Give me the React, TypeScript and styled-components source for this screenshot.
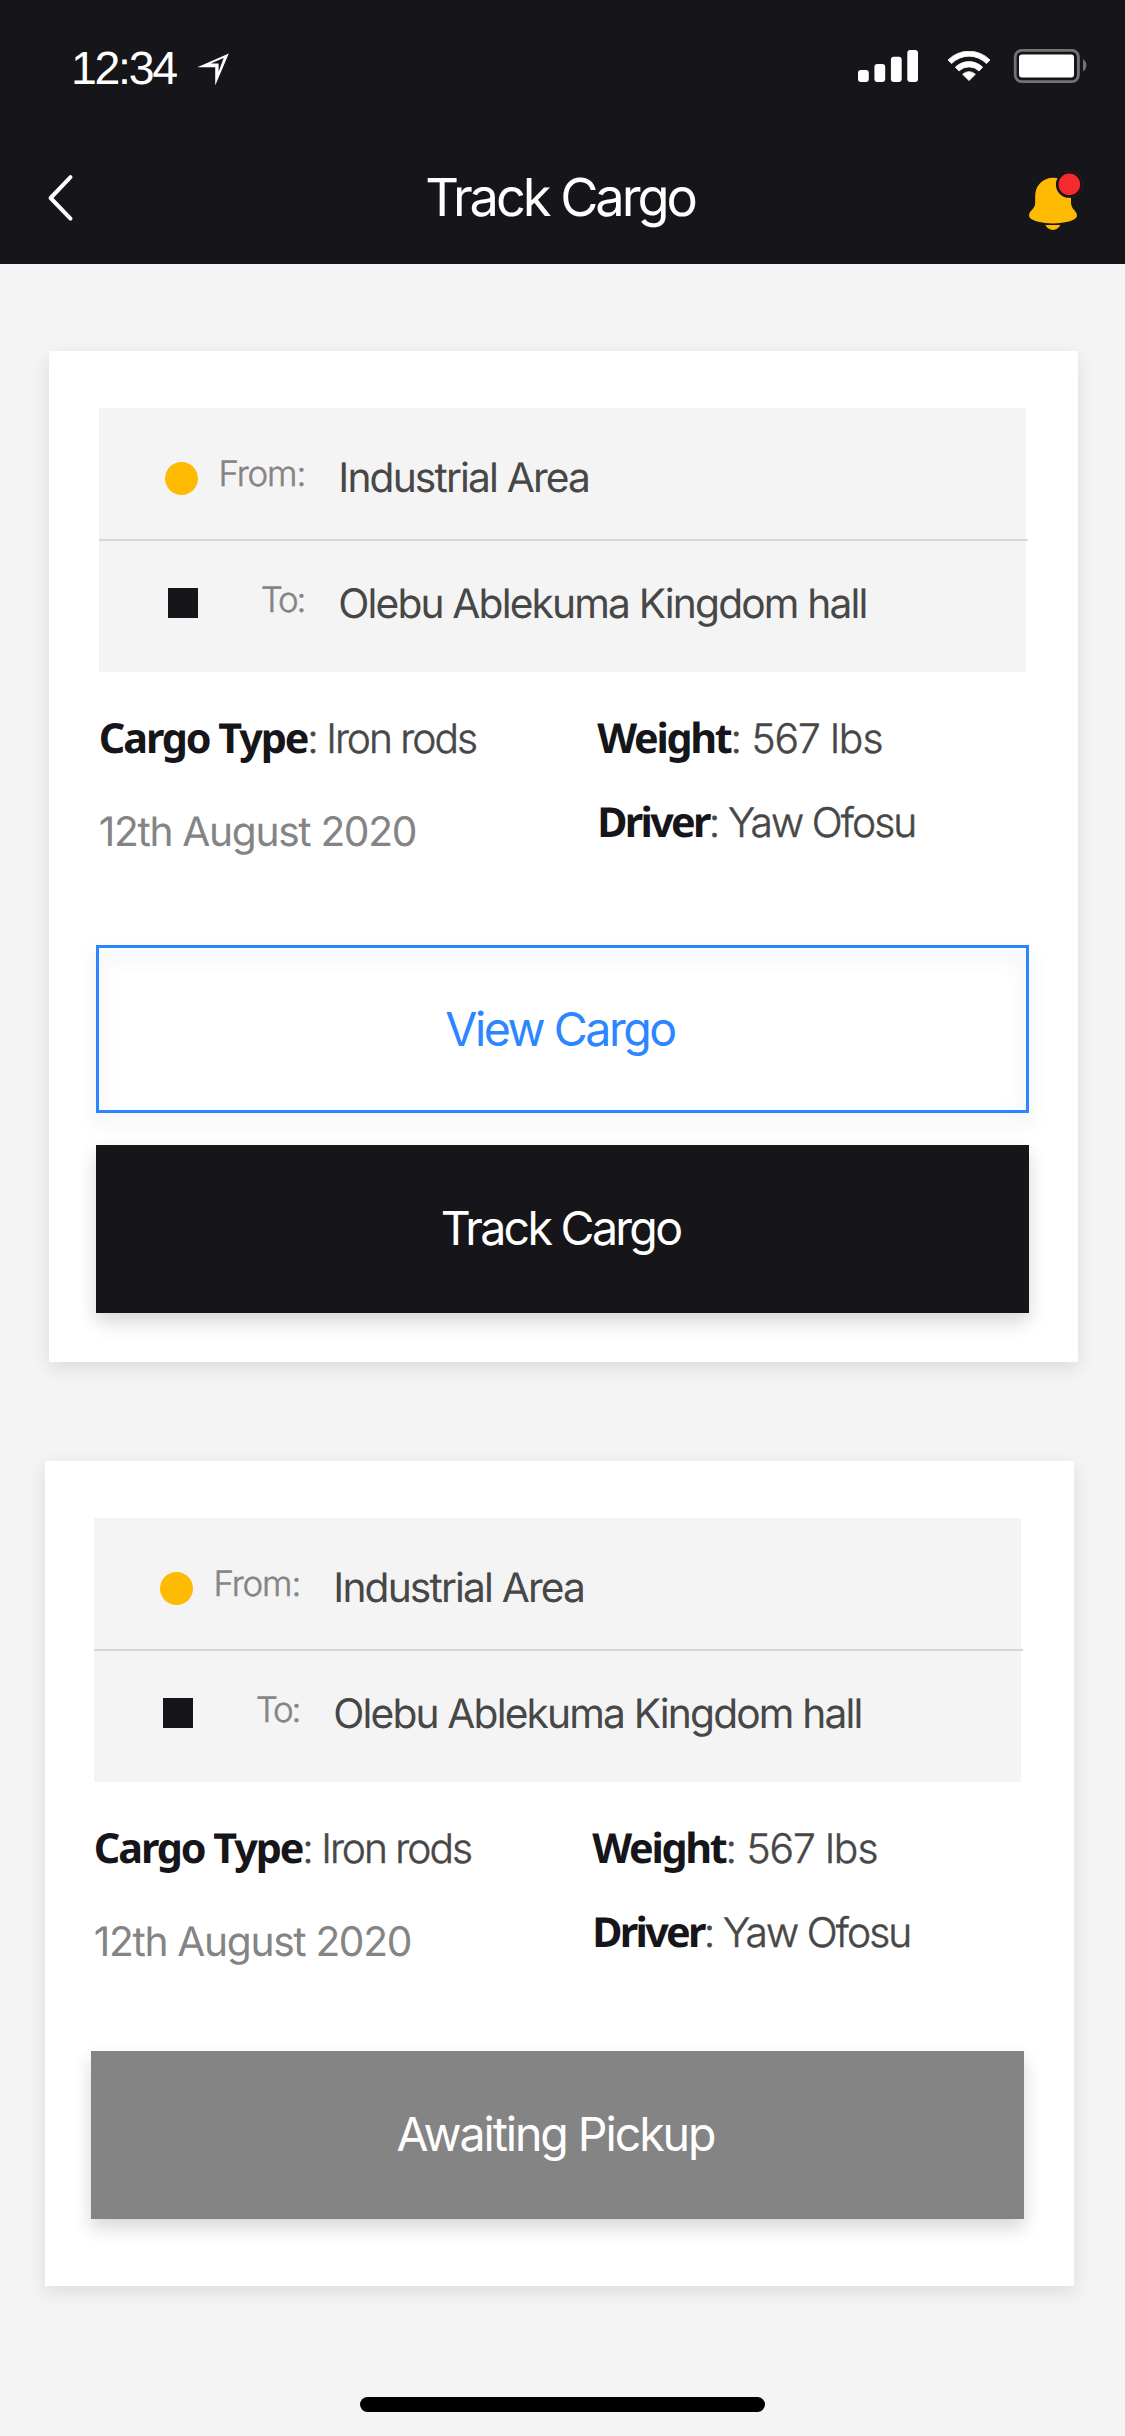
import React from 'react';
import styled, { createGlobalStyle, css } from 'styled-components';

const ink = '#161519';
const text = '#474747';
const muted = '#848484';
const paper = '#f4f4f4';
const amber = '#ffba02';
const blue = '#2c86ff';

const GlobalStyle = createGlobalStyle`
  *, *::before { box-sizing: border-box; }
  body {
    margin: 0;
    background: ${paper};
    font-family: Inter, "Liberation Sans", sans-serif;
    text-rendering: geometricPrecision;
  }
  svg { display: block; flex: none; }
`;

const Screen = styled.div`
  display: flex;
  flex-direction: column;
  width: 1125px;
  height: 2436px;
  overflow: hidden;
  background: ${paper};
`;

const TopArea = styled.header`
  flex: none;
  background: ${ink};
  color: #fff;
`;

const StatusBar = styled.div`
  display: flex;
  align-items: center;
  justify-content: space-between;
  height: 132px;
  padding: 0 38px 0 71px;
`;

const ClockGroup = styled.div`
  display: flex;
  align-items: center;
  gap: 21px;

  svg { margin-top: 6px; }
`;

const Clock = styled.span`
  padding-top: 3px;
  font-family: "Liberation Sans", Arial, sans-serif;
  font-size: 46.5px;
  line-height: 54px;
  letter-spacing: -2.3px;
`;

const SystemIcons = styled.div`
  display: flex;
  align-items: center;

  svg + svg { margin-left: 29px; }
  svg + svg + svg { margin-left: 22px; }
`;

const NavBar = styled.nav`
  display: grid;
  grid-template-columns: 56px 1fr 56px;
  align-items: center;
  height: 132px;
  padding: 0 41px 0 47px;
`;

const Title = styled.h1`
  margin: 0;
  padding: 0 11px 2px 0;
  font-size: 52.35px;
  font-weight: 400;
  line-height: 64px;
  letter-spacing: -3.05px;
  text-align: center;
`;

const IconButton = styled.button<{ $drop?: number }>`
  margin: ${({ $drop = 0 }) => $drop}px 0 0;
  padding: 0;
  border: 0;
  background: none;
`;

const CardList = styled.main`
  display: flex;
  flex-direction: column;
  gap: 99px;
  padding-top: 87px;
`;

const Card = styled.article<{ $left: number; $inset: number; $height: number }>`
  display: flex;
  flex-direction: column;
  width: 1029px;
  height: ${({ $height }) => $height}px;
  margin-left: ${({ $left }) => $left}px;
  padding: 57px ${({ $inset }) => 96 - $inset}px 0 ${({ $inset }) => $inset}px;
  background: #fff;
  box-shadow: 0 6px 18px rgba(0, 0, 0, 0.1);
`;

const Route = styled.section`
  display: flex;
  flex-direction: column;
  width: 927px;
  margin-left: 3px;
  background: ${paper};
`;

const Divider = styled.div`
  width: 929px;
  height: 2px;
  background: #d7d7d7;
`;

const Stop = styled.div<{ $last?: boolean }>`
  display: grid;
  grid-template-columns: 33px 108px 1fr;
  align-items: center;
  height: 131px;
  padding-left: 66.3px;
  padding-bottom: ${({ $last }) => ($last ? 14 : 0)}px;
`;

const Marker = styled.span<{ $square?: boolean }>`
  justify-self: end;
  width: 33px;
  height: 33px;
  margin-top: 10px;
  border-radius: 50%;
  background: ${amber};

  ${({ $square }) =>
    $square &&
    css`
      width: 30px;
      height: 30px;
      margin-top: 7px;
      border-radius: 0;
      background: ${ink};
    `}
`;

const StopLabel = styled.span<{ $track: number }>`
  margin-right: ${({ $track }) => -$track}px;
  color: ${muted};
  font-size: 34.9px;
  font-weight: 300;
  -webkit-text-stroke: 0.5px ${muted};
  line-height: 44px;
  letter-spacing: ${({ $track }) => $track}px;
  text-align: right;
`;

const Place = styled.span`
  padding: 8px 0 0 32px;
  color: ${text};
  font-size: 40.7px;
  line-height: 50px;
  letter-spacing: -1.84px;
  white-space: nowrap;
`;

const Details = styled.section<{ $height: number }>`
  display: grid;
  grid-template-columns: 498.5px 1fr;
  height: ${({ $height }) => $height}px;
  padding: 42px 0 0 2.8px;
`;

const DetailColumn = styled.div<{ $gap: number }>`
  display: flex;
  flex-direction: column;
  gap: ${({ $gap }) => $gap}px;
`;

const Detail = styled.p<{ $track: number }>`
  margin: 0;
  color: ${text};
  font-size: 40.7px;
  font-weight: 300;
  -webkit-text-stroke: 0.5px ${text};
  line-height: 50px;
  letter-spacing: ${({ $track }) => $track}px;
  white-space: nowrap;
`;

const DetailName = styled.strong<{ $track: number }>`
  color: ${ink};
  font-family: "Noto Sans", "Open Sans", sans-serif;
  font-size: 41.3px;
  font-weight: 700;
  -webkit-text-stroke: 0;
  line-height: 0;
  letter-spacing: ${({ $track }) => $track}px;
`;

const DateText = styled.time`
  color: ${muted};
  font-size: 40.7px;
  line-height: 50px;
  letter-spacing: -1.33px;
`;

const Actions = styled.footer`
  display: flex;
  flex-direction: column;
  gap: 32px;
  width: 933px;
`;

const Button = styled.button<{ $track: number; $fill: string }>`
  height: 168px;
  padding: 0 4px 2px 0;
  border: 0;
  background: ${({ $fill }) => $fill};
  box-shadow: 0 9px 18px rgba(0, 0, 0, 0.16);
  color: #fff;
  font: 400 46.5px/58px Inter, sans-serif;
  letter-spacing: ${({ $track }) => $track}px;
`;

const OutlineButton = styled(Button)`
  display: grid;
  padding: 0;
  box-shadow: none;
  color: ${blue};

  &::before {
    content: '';
    grid-area: 1 / 1;
    border: 3px solid ${blue};
    filter: drop-shadow(0 9px 9px rgba(0, 0, 0, 0.16));
  }

  span {
    grid-area: 1 / 1;
    place-self: center;
    padding: 0 5px 0 0;
  }
`;

const HomeIndicator = styled.div`
  flex: none;
  width: 405px;
  height: 15px;
  margin: 111px auto 0;
  border-radius: 7.5px;
  background: #000;
`;

const LocationIcon = () => (
  <svg width="32" height="33" viewBox="0 0 32 33">
    <path
      d="M0.3 14.3 31.8 0.4 18.2 32.6V14.2H0.3ZM13.8 10.4H21.6V18.8L26.6 5.1Z"
      fill="#fff"
      fillRule="evenodd"
    />
  </svg>
);

const SignalIcon = () => (
  <svg width="60" height="32" viewBox="0 0 60 32" fill="#fff">
    <rect x="0" y="20" width="10.8" height="12" rx="3" />
    <rect x="16.4" y="14" width="10.8" height="18" rx="3" />
    <rect x="32.9" y="6.8" width="10.8" height="25.2" rx="3" />
    <rect x="49.3" y="0" width="10.7" height="32" rx="3" />
  </svg>
);

const WifiIcon = () => (
  <svg width="44" height="30" viewBox="0 0 44 30" fill="#fff" stroke="#fff" strokeWidth="0.8" strokeLinejoin="round">
    <path d="M1 9A29.5 29.5 0 0 1 43 9L39.5 12.6A24.4 24.4 0 0 0 4.5 12.6Z" />
    <path d="M8.3 16.2A19.6 19.6 0 0 1 35.7 16.2L32 20A14.2 14.2 0 0 0 12 20Z" />
    <path d="M15.6 23.3A9 9 0 0 1 28.4 23.3L22 29.6Z" />
  </svg>
);

const BatteryIcon = () => (
  <svg width="74" height="34" viewBox="0 0 74 34">
    <rect x="2.2" y="1.4" width="63.2" height="31.2" rx="6.6" fill="none" stroke="#737275" strokeWidth="2.8" />
    <rect x="6" y="5.5" width="55" height="23" rx="3" fill="#fff" />
    <path d="M70 10.2C72.4 11.6 73.4 14 73.4 16.3S72.4 21 70 22.4Z" fill="#737275" />
  </svg>
);

const BackIcon = () => (
  <svg width="27" height="48" viewBox="0 0 27 48">
    <path
      d="M23.5 3.2 3.6 24 23.5 44.6"
      fill="none"
      stroke="#fff"
      strokeWidth="4"
      strokeLinecap="round"
      strokeLinejoin="round"
    />
  </svg>
);

const BellIcon = () => (
  <svg width="56" height="60" viewBox="0 0 56 60">
    <path
      d="M25 7.7C15 7.7 7.2 15.5 7.2 25.5V33C7.2 39 1 40.5 1 45.5C1 50 12 53.4 25 53.4S49 50 49 45.5C49 41 43 39 43 33V25.5C43 15.5 35 7.7 25 7.7Z"
      fill={amber}
    />
    <path d="M17.3 54.8C20 55.2 30 55.2 32.5 54.8C30.8 58 28.5 60 25 60S18.8 58 17.3 54.8Z" fill={amber} />
    <circle cx="41.3" cy="14.4" r="13.4" fill={ink} />
    <path d="M36 2.1A13.4 13.4 0 1 1 44 27.5" fill="none" stroke="#f52a2c" strokeOpacity="0.35" strokeWidth="0.5" />
    <circle cx="41.3" cy="14.4" r="10.8" fill="#f52a2c" />
  </svg>
);

interface CargoCardProps {
  left: number;
  inset: number;
  height: number;
  detailsHeight: number;
  children: React.ReactNode;
}

const CargoCard = ({ left, inset, height, detailsHeight, children }: CargoCardProps) => (
  <Card $left={left} $inset={inset} $height={height}>
    <Route>
      <Stop>
        <Marker />
        <StopLabel $track={-1.1}>From:</StopLabel>
        <Place>Industrial Area</Place>
      </Stop>
      <Divider />
      <Stop $last>
        <Marker $square />
        <StopLabel $track={-2.2}>To:</StopLabel>
        <Place>Olebu Ablekuma Kingdom hall</Place>
      </Stop>
    </Route>
    <Details $height={detailsHeight}>
      <DetailColumn $gap={43}>
        <Detail $track={-2}>
          <DetailName $track={-2.08}>Cargo Type</DetailName>: Iron rods
        </Detail>
        <DateText>12th August 2020</DateText>
      </DetailColumn>
      <DetailColumn $gap={34}>
        <Detail $track={-0.98}>
          <DetailName $track={-2.3}>Weight</DetailName>: 567 lbs
        </Detail>
        <Detail $track={-1.86}>
          <DetailName $track={-2.7}>Driver</DetailName>: Yaw Ofosu
        </Detail>
      </DetailColumn>
    </Details>
    <Actions>{children}</Actions>
  </Card>
);

export default function App() {
  return (
    <>
      <GlobalStyle />
      <Screen>
        <TopArea>
          <StatusBar>
            <ClockGroup>
              <Clock>12:34</Clock>
              <LocationIcon />
            </ClockGroup>
            <SystemIcons>
              <SignalIcon />
              <WifiIcon />
              <BatteryIcon />
            </SystemIcons>
          </StatusBar>
          <NavBar>
            <IconButton aria-label="Back">
              <BackIcon />
            </IconButton>
            <Title>Track Cargo</Title>
            <IconButton aria-label="Notifications" $drop={4}>
              <BellIcon />
            </IconButton>
          </NavBar>
        </TopArea>
        <CardList>
          <CargoCard left={49} inset={47} height={1011} detailsHeight={273}>
            <OutlineButton $fill="transparent" $track={-2.45}>
              <span>View Cargo</span>
            </OutlineButton>
            <Button $fill={ink} $track={-2.7}>
              Track Cargo
            </Button>
          </CargoCard>
          <CargoCard left={45} inset={46} height={825} detailsHeight={269}>
            <Button $fill={muted} $track={-2.07}>
              Awaiting Pickup
            </Button>
          </CargoCard>
        </CardList>
        <HomeIndicator />
      </Screen>
    </>
  );
}
